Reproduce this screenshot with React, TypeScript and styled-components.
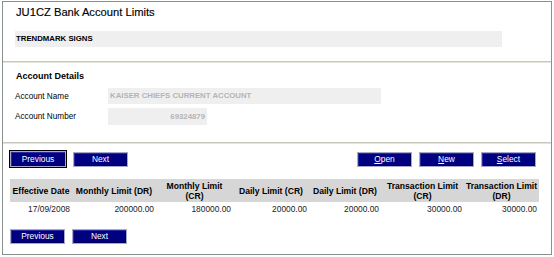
import styled, { createGlobalStyle } from 'styled-components'

const Global = createGlobalStyle`
  body {
    margin: 0;
    background: #ffffff;
    font-family: "Liberation Sans", Arial, sans-serif;
    color: #000;
  }
`

const Frame = styled.div`
  margin: 1px 0 0 2px;
  width: 548px;
  height: 252px;
  border: 1px solid #889090;
  display: flex;
  flex-direction: column;
`

const Section = styled.div<{ $h: number; $pt: number; $divider?: boolean }>`
  height: ${p => p.$h}px;
  padding-top: ${p => p.$pt}px;
  box-sizing: border-box;
  display: flex;
  flex-direction: column;
  border-bottom: ${p => (p.$divider ? '1px solid #c8c8c0' : 'none')};
  box-shadow: ${p => (p.$divider ? '0 1px 0 #e4e4dc' : 'none')};
  margin-bottom: ${p => (p.$divider ? '1px' : '0')};
`

const Title = styled.div`
  font-size: 11.2px;
  line-height: 14px;
  padding-left: 13px;
  -webkit-text-stroke: 0.15px #000;
`

const CompanyBox = styled.div`
  margin: 12px 0 0 12px;
  width: 487px;
  height: 16px;
  background: #efefef;
  font-size: 7.8px;
  font-weight: bold;
  line-height: 16px;
  padding-left: 1px;
  box-sizing: border-box;
`

const Heading = styled.div`
  font-size: 9px;
  font-weight: bold;
  line-height: 12px;
  padding-left: 13px;
`

const Field = styled.div<{ $mt: number }>`
  display: flex;
  align-items: center;
  margin-top: ${p => p.$mt}px;
  padding-left: 12px;
`

const Label = styled.div`
  width: 93px;
  font-size: 8.2px;
`

const ValueBox = styled.div<{ $w: number; $h: number; $right?: boolean }>`
  width: ${p => p.$w}px;
  height: ${p => p.$h}px;
  line-height: ${p => p.$h}px;
  background: #efefef;
  color: #b4b4b4;
  font-size: 7.8px;
  font-weight: bold;
  box-sizing: border-box;
  padding: 0 2px;
  text-align: ${p => (p.$right ? 'right' : 'left')};
`

const ButtonRow = styled.div<{ $mt: number }>`
  display: flex;
  align-items: center;
  margin-top: ${p => p.$mt}px;
  height: 16px;
`

const Group = styled.div`
  display: flex;
  gap: 7px;
  align-items: center;
`

const RightGroup = styled(Group)`
  margin-left: auto;
  margin-right: 4px;
`

const Button = styled.button<{ $focus?: boolean }>`
  width: ${p => (p.$focus ? 56 : 55)}px;
  height: ${p => (p.$focus ? 16 : 15)}px;
  margin: 0;
  padding: 0;
  background: #000080;
  color: #fff;
  font-family: "Liberation Sans", Arial, sans-serif;
  font-size: 8.4px;
  border: 1px solid #a8a8c8;
  box-shadow: inset 1px 1px 0 #2a2aa0, inset -1px -1px 0 #00005a;
  outline: ${p => (p.$focus ? '1px solid #000' : 'none')};
  outline-offset: 0;
  box-sizing: border-box;
  cursor: pointer;
  u {
    text-decoration: underline;
  }
`

const Table = styled.div`
  margin-top: 12px;
  width: 529px;
  display: flex;
  flex-direction: column;
`

const Row = styled.div<{ $head?: boolean }>`
  display: grid;
  grid-template-columns: 62px 84px 77px 76px 72px 83px 75px;
  height: ${p => (p.$head ? 23 : 13)}px;
  background: ${p => (p.$head ? '#d6d6d6' : 'transparent')};
  margin-bottom: ${p => (p.$head ? 1 : 0)}px;
`

const HeadCell = styled.div`
  display: flex;
  flex-direction: column;
  align-items: center;
  justify-content: center;
  text-align: center;
  font-size: 8.6px;
  font-weight: bold;
  line-height: 10px;
  white-space: nowrap;
`

const Cell = styled.div`
  text-align: right;
  font-size: 8.4px;
  line-height: 13px;
  color: #222;
  padding-right: 2px;
`

const Body = styled.div`
  padding: 0 11px 0 7px;
  display: flex;
  flex-direction: column;
`

const headers: string[][] = [
  ['Effective Date'],
  ['Monthly Limit (DR)'],
  ['Monthly Limit', '(CR)'],
  ['Daily Limit (CR)'],
  ['Daily Limit (DR)'],
  ['Transaction Limit', '(CR)'],
  ['Transaction Limit', '(DR)'],
]

const rows = [
  ['17/09/2008', '200000.00', '180000.00', '20000.00', '20000.00', '30000.00', '30000.00'],
]

const App = () => {
  return (
    <>
      <Global />
      <Frame>
        <Section $h={60} $pt={3} $divider>
          <Title>JU1CZ Bank Account Limits</Title>
          <CompanyBox>TRENDMARK SIGNS</CompanyBox>
        </Section>
        <Section $h={80} $pt={7} $divider>
          <Heading>Account Details</Heading>
          <Field $mt={6}>
            <Label>Account Name</Label>
            <ValueBox $w={273} $h={16}>KAISER CHIEFS CURRENT ACCOUNT</ValueBox>
          </Field>
          <Field $mt={4}>
            <Label>Account Number</Label>
            <ValueBox $w={99} $h={17} $right>69324879</ValueBox>
          </Field>
        </Section>
        <Body>
          <ButtonRow $mt={7}>
            <Group>
              <Button $focus>Previous</Button>
              <Button>Next</Button>
            </Group>
            <RightGroup>
              <Button><u>O</u>pen</Button>
              <Button><u>N</u>ew</Button>
              <Button><u>S</u>elect</Button>
            </RightGroup>
          </ButtonRow>
          <Table>
            <Row $head>
              {headers.map(h => (
                <HeadCell key={h.join(' ')}>
                  {h.map(line => (
                    <span key={line}>{line}</span>
                  ))}
                </HeadCell>
              ))}
            </Row>
            {rows.map((r, i) => (
              <Row key={i}>
                {r.map((c, j) => (
                  <Cell key={j}>{c}</Cell>
                ))}
              </Row>
            ))}
          </Table>
          <ButtonRow $mt={12}>
            <Group>
              <Button>Previous</Button>
              <Button>Next</Button>
            </Group>
          </ButtonRow>
        </Body>
      </Frame>
    </>
  )
}

export default App
